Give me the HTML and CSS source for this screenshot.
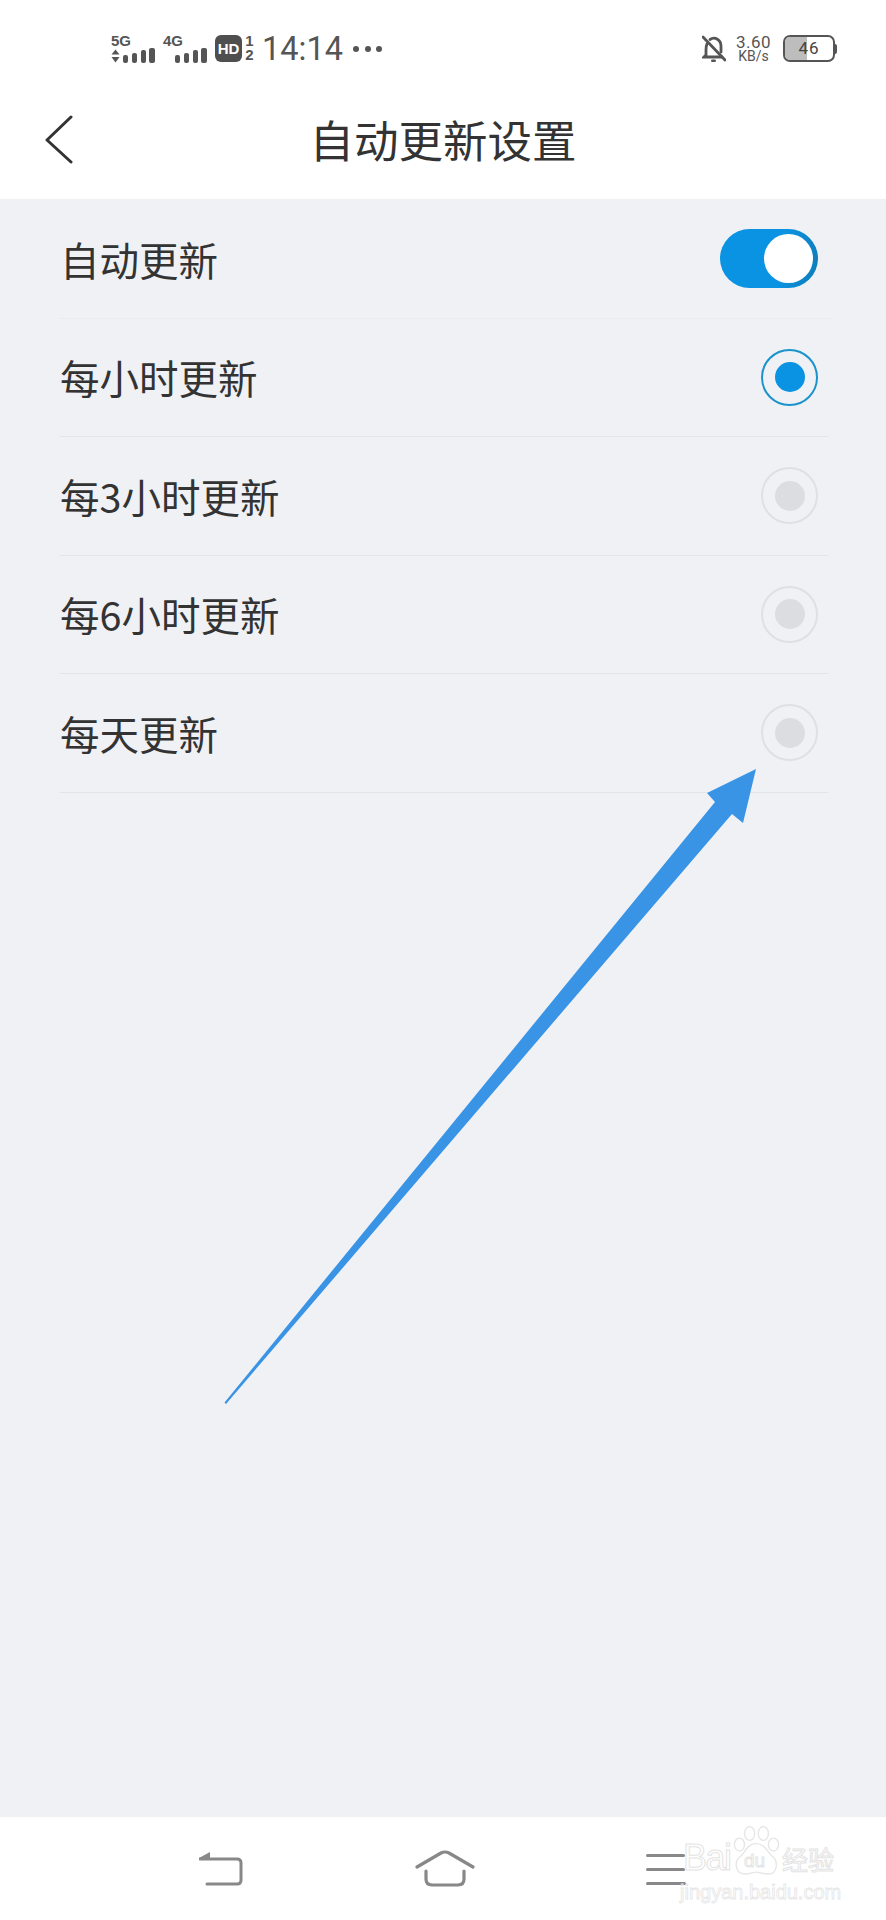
FILE: index.html
```html
<!DOCTYPE html>
<html lang="zh-CN">
<head>
<meta charset="utf-8">
<title>自动更新设置</title>
<link rel="stylesheet" href="styles.css">
</head>
<body>
<div class="page">
  <header class="top">
    <div class="status">
      <div class="status-left">
        <div class="sig">
          <span class="sig-label">5G</span>
          <svg class="sig-bars" width="44" height="15" viewBox="0 0 44 15"><path d="M4.500 1.500 L8.500 6.500 H0.500 Z M4.500 14.500 L8.500 9 H0.500 Z" fill="#555"/><g fill="#555"><rect x="12" y="7" width="5" height="8" rx="2"/><rect x="21" y="5" width="5" height="10" rx="2"/><rect x="30" y="2" width="5" height="13" rx="2"/><rect x="38" y="0" width="6" height="15" rx="2"/></g></svg>
        </div>
        <div class="sig sig-b">
          <span class="sig-label">4G</span>
          <svg class="sig-bars" width="44" height="15" viewBox="0 0 44 15"><g fill="#555"><rect x="12" y="7" width="5" height="8" rx="2"/><rect x="21" y="5" width="5" height="10" rx="2"/><rect x="30" y="2" width="5" height="13" rx="2"/><rect x="38" y="0" width="6" height="15" rx="2"/></g></svg>
        </div>
        <span class="hd">HD</span>
        <div class="sim"><span>1</span><span>2</span></div>
        <span class="time">14:14</span>
        <div class="dots"><i></i><i></i><i></i></div>
      </div>
      <div class="status-right">
        <svg class="bell" width="24" height="28" viewBox="0 0 24 28"><g fill="none" stroke="#555" stroke-width="2.800" stroke-linecap="round"><path d="M5 9 C4 11 4 13 4 15 V20 L2 22 H20"/><path d="M8 4.500 C13 1 19 5 19 11 V17"/><path d="M1 2 L23 25"/></g><rect x="9" y="24.500" width="5" height="2.500" rx="1.200" fill="#555"/></svg>
        <div class="speed"><span class="speed-a">3.60</span><span class="speed-b">KB/s</span></div>
        <div class="battery"><span class="battery-fill"></span><span class="battery-num">46</span></div>
        <span class="battery-nub"></span>
      </div>
    </div>
    <div class="nav">
      <svg class="back" width="28" height="50" viewBox="0 0 28 50"><path d="M26 2 L2 25 L26 47" fill="none" stroke="#333" stroke-width="3" stroke-linecap="round" stroke-linejoin="round"/></svg>
      <h1 class="title">自动更新设置</h1>
    </div>
  </header>

  <main class="list">
    <div class="row row-first">
      <span class="label">自动更新</span>
      <span class="toggle"><span class="knob"></span></span>
    </div>
    <div class="row">
      <span class="label">每小时更新</span>
      <span class="radio radio-on"><span class="dot"></span></span>
    </div>
    <div class="row">
      <span class="label">每3小时更新</span>
      <span class="radio"><span class="dot"></span></span>
    </div>
    <div class="row">
      <span class="label">每6小时更新</span>
      <span class="radio"><span class="dot"></span></span>
    </div>
    <div class="row">
      <span class="label">每天更新</span>
      <span class="radio"><span class="dot"></span></span>
    </div>
  </main>

  <svg class="arrow" width="886" height="1920" viewBox="0 0 886 1920"><path d="M224.500 1402.500 L715 802 L707 793 L756 769 L743 823 L732 814 L226 1404 Z" fill="#3a94e6"/></svg>

  <footer class="bottom">
    <svg width="44" height="36" viewBox="0 0 44 36"><g fill="none" stroke="#888" stroke-width="3" stroke-linecap="round" stroke-linejoin="round"><path d="M1 8 H38 Q42 8 42 12 V29 Q42 33 38 33 H8"/></g><path d="M0 7 L11 1 V9 H0 Z" fill="#888"/></svg>
    <svg width="60" height="38" viewBox="0 0 60 38"><g fill="none" stroke="#888" stroke-width="3.200" stroke-linecap="round" stroke-linejoin="round"><path d="M2 17 L26 3 Q30 1 34 3 L58 17"/><path d="M11 21 V29 Q11 35 17 35 H43 Q49 35 49 29 V21"/></g></svg>
    <svg width="40" height="32" viewBox="0 0 40 32"><g fill="#888"><rect x="0" y="1" width="39" height="3" rx="1.500"/><rect x="0" y="15" width="39" height="3" rx="1.500"/><rect x="0" y="29" width="40" height="3" rx="1.500"/></g></svg>
  </footer>

  <div class="mark">
    <div class="mark-top">
      <span class="mark-bai">Bai</span>
      <span class="mark-paw">
        <svg class="paw-svg" width="46" height="50" viewBox="0 0 50 54"><g fill="#fff" fill-opacity="0.800" stroke="#e6e6e6" stroke-width="1.500"><ellipse cx="7" cy="20" rx="5.500" ry="7"/><ellipse cx="18" cy="8" rx="5.500" ry="7.500"/><ellipse cx="33" cy="8" rx="5.500" ry="7.500"/><ellipse cx="44" cy="20" rx="5.500" ry="7"/><path d="M25 19 C15 19 14 28 8 33 C1 38 2 52 13 52 C19 52 22 50 25 50 C29 50 32 52 38 52 C49 52 49 38 43 33 C37 28 35 19 25 19 Z"/></g></svg>
        <span class="mark-du">du</span>
      </span>
      <span class="mark-cn">经验</span>
    </div>
    <div class="mark-url">jingyan.baidu.com</div>
  </div>
</div>
</body>
</html>
```

FILE: styles.css
```css
* { box-sizing: border-box; }
html, body { margin: 0; padding: 0; }
body {
  width: 886px;
  height: 1920px;
  overflow: hidden;
  background: #f0f1f5;
  font-family: "Noto Sans CJK SC", "Noto Sans", sans-serif;
  color: #333;
}
.page {
  position: relative;
  width: 886px;
  height: 1920px;
  display: flex;
  flex-direction: column;
}

/* header */
.top { background: #fff; height: 199px; flex: none; }
.status {
  height: 80px;
  padding: 26px 49px 0 111px;
  display: flex;
  justify-content: space-between;
  align-items: flex-start;
  color: #555;
}
.status-left, .status-right { display: flex; align-items: flex-start; }
.sig { width: 44px; display: flex; flex-direction: column; padding-top: 8px; }
.sig-b { margin-left: 8px; }
.sig-label {
  font-family: "Liberation Sans", sans-serif;
  font-weight: 700;
  font-size: 15px;
  line-height: 14px;
  color: #555;
}
.sig-bars { display: block; }
.hd {
  margin: 9px 0 0 8px;
  width: 27px;
  height: 27px;
  border-radius: 6px;
  background: #4f4f4f;
  color: #fff;
  font-family: "Liberation Sans", sans-serif;
  font-weight: 700;
  font-size: 15px;
  line-height: 27px;
  text-align: center;
}
.sim {
  margin: 8px 0 0 2px;
  display: flex;
  flex-direction: column;
  width: 11px;
  font-family: "Liberation Sans", sans-serif;
  font-weight: 700;
  font-size: 15px;
  line-height: 14px;
  text-align: center;
}
.time {
  margin-left: 7px;
  font-family: "Roboto", sans-serif;
  font-size: 32.500px;
  line-height: 46px;
  width: 84px;
  color: #555;
}
.dots { margin: 20px 0 0 7px; display: flex; gap: 5.500px; }
.dots i { width: 6px; height: 6px; border-radius: 50%; background: #555; display: block; }

.bell { margin: 9px 8px 0 0; }
.speed {
  width: 39px;
  display: flex;
  flex-direction: column;
  align-items: center;
  padding-top: 8px;
  font-family: "Roboto", sans-serif;
  color: #555;
}
.speed-a { font-size: 17px; line-height: 16px; letter-spacing: 0.500px; }
.speed-b { font-size: 14px; line-height: 13px; }
.battery {
  position: relative;
  margin: 9px 0 0 10px;
  width: 52px;
  height: 27px;
  border: 2.500px solid #555;
  border-radius: 7px;
  overflow: hidden;
  background: #fff;
}
.battery-fill {
  position: absolute;
  left: 0; top: 0; bottom: 0;
  width: 46%;
  background: #bdbdbd;
}
.battery-num {
  position: relative;
  display: block;
  text-align: center;
  font-family: "Roboto", sans-serif;
  font-size: 17px;
  line-height: 22px;
  letter-spacing: 1px;
  color: #444;
}
.battery-nub {
  width: 2px;
  height: 10px;
  margin-top: 18px;
  background: #555;
  border-radius: 0 2px 2px 0;
}

.nav {
  height: 119px;
  padding: 0 0 0 45px;
  display: flex;
  align-items: center;
}
.back { flex: none; }
.title {
  flex: 1;
  margin: -2px 0 0 -28px;
  text-align: center;
  font-weight: 400;
  font-size: 44.500px;
  line-height: 60px;
  color: #333;
  padding-right: 45px;
}

/* list */
.list { flex: 1; padding: 1px 58px 0 60px; }
.row {
  height: 118.500px;
  display: flex;
  align-items: center;
  justify-content: space-between;
  border-bottom: 1.500px solid #e3e4e8;
  padding-right: 10px;
}
.row-first { border-bottom-color: #eaebef; margin-right: -3px; padding-right: 13px; }
.label { font-size: 39.500px; line-height: 54px; color: #333; }

.toggle {
  position: relative;
  width: 98px;
  height: 59px;
  border-radius: 30px;
  background: linear-gradient(100deg, #0a93e2 0%, #0a93e2 62%, #0f7cb8 100%);
}
.knob {
  position: absolute;
  right: 5px;
  top: 5px;
  width: 49px;
  height: 49px;
  border-radius: 50%;
  background: #fff;
}
.radio {
  width: 57px;
  height: 57px;
  border-radius: 50%;
  border: 2.500px solid #dfe0e3;
  display: flex;
  align-items: center;
  justify-content: center;
}
.radio .dot { width: 30px; height: 30px; border-radius: 50%; background: #dcdde0; }
.radio-on { border-color: #1a93cd; }
.radio-on .dot { background: #0a93e2; }

/* annotation arrow */
.arrow { position: absolute; left: 0; top: 0; pointer-events: none; }

/* bottom bar */
.bottom {
  flex: none;
  height: 103px;
  background: #fff;
  padding: 0 200px 0 199px;
  display: flex;
  align-items: center;
  justify-content: space-between;
}

/* watermark */
.mark {
  position: absolute;
  left: 683px;
  top: 1826px;
  width: 156px;
  color: transparent;
  -webkit-text-stroke: 1px #e4e4e4;
}
.mark-top { display: flex; align-items: flex-end; height: 50px; }
.mark-bai {
  flex: none;
  width: 50px;
  font-family: "Liberation Sans", sans-serif;
  font-size: 36px;
  line-height: 36px;
  letter-spacing: -1.500px;
}
.mark-paw { position: relative; width: 46px; height: 50px; flex: none; display: block; }
.paw-svg { display: block; }
.mark-du {
  position: absolute;
  left: 11px;
  bottom: 5px;
  font-family: "Liberation Sans", sans-serif;
  font-size: 19px;
  line-height: 20px;
}
.mark-cn { font-size: 26px; line-height: 34px; margin-left: 3px; white-space: nowrap; }
.mark-url {
  font-family: "Liberation Sans", sans-serif;
  font-size: 20px;
  line-height: 22px;
  margin: 5px 0 0 -3px;
  white-space: nowrap;
  -webkit-text-stroke: 0.800px #e6e6e6;
}
```
